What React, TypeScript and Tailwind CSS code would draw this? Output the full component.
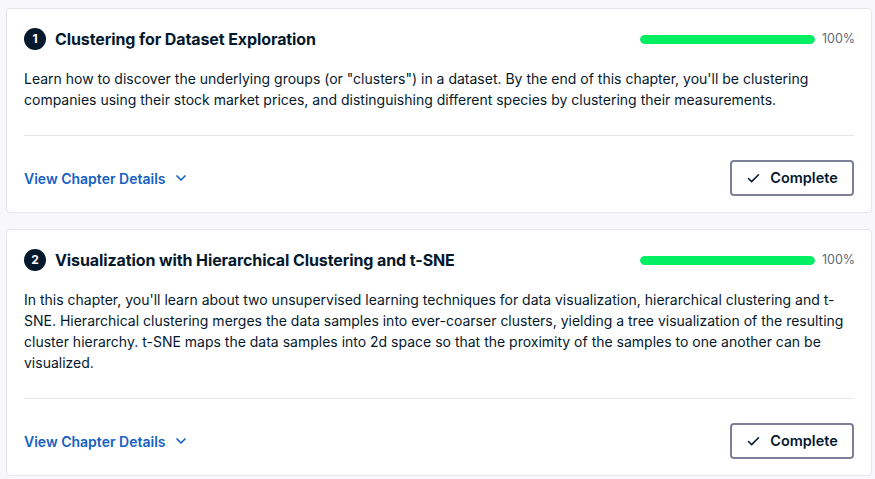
import { Check, ChevronDown } from 'lucide-react'

interface ChapterProps {
  index: number
  title: string
  description: string
  progress: number
}

function Chapter({ index, title, description, progress }: ChapterProps) {
  return (
    <div className="bg-white border border-[#e5e5ee] rounded-[4px] px-[17px] pt-[19px] pb-[16px]">
      {/* 标题行 */}
      <div className="flex items-center justify-between h-[22px]">
        <div className="flex items-center gap-[9px]">
          <span className="w-[22px] h-[22px] rounded-full bg-[#05192d] text-white text-[12px] font-bold flex items-center justify-center">
            {index}
          </span>
          <h3 className="text-[16px] font-bold text-[#05192d] tracking-[-0.1px]">{title}</h3>
        </div>
        <div className="flex items-center gap-[7px]">
          <div className="w-[175px] h-[9px] rounded-full bg-[#e5e5ee] overflow-hidden">
            <div className="h-full rounded-full bg-[#03ef62]" style={{ width: `${progress}%` }} />
          </div>
          <span className="text-[12.5px] text-[#5d6a77] w-[32px]">{progress}%</span>
        </div>
      </div>

      <p className="mt-[18px] text-[14px] leading-[21px] text-[#05192d]">{description}</p>

      <div className="mt-[25px] h-px bg-[#e5e5ea]" />

      {/* 底部操作 */}
      <div className="mt-[24px] flex items-center justify-between">
        <button className="flex items-center gap-[8px] text-[14px] font-semibold text-[#1561c2]">
          View Chapter Details
          <ChevronDown size={16} strokeWidth={2.5} />
        </button>
        <button className="w-[124px] h-[36px] border-2 border-[#7d8098] rounded-[4px] flex items-center justify-center gap-[9px] text-[14.5px] font-semibold text-[#05192d]">
          <Check size={15} strokeWidth={2.5} />
          Complete
        </button>
      </div>
    </div>
  )
}

const chapters = [
  {
    title: 'Clustering for Dataset Exploration',
    description:
      'Learn how to discover the underlying groups (or "clusters") in a dataset. By the end of this chapter, you\'ll be clustering companies using their stock market prices, and distinguishing different species by clustering their measurements.',
  },
  {
    title: 'Visualization with Hierarchical Clustering and t-SNE',
    description:
      "In this chapter, you'll learn about two unsupervised learning techniques for data visualization, hierarchical clustering and t-SNE. Hierarchical clustering merges the data samples into ever-coarser clusters, yielding a tree visualization of the resulting cluster hierarchy. t-SNE maps the data samples into 2d space so that the proximity of the samples to one another can be visualized.",
  },
]

export default function App() {
  return (
    <div
      className="min-h-[479px] bg-[#f7f7fc] pt-[8px] pl-[6px] pr-[3px] flex flex-col gap-[16px]"
      style={{ fontFamily: 'Inter, "Noto Sans", sans-serif' }}
    >
      {chapters.map((c, i) => (
        <Chapter key={i} index={i + 1} title={c.title} description={c.description} progress={100} />
      ))}
    </div>
  )
}
